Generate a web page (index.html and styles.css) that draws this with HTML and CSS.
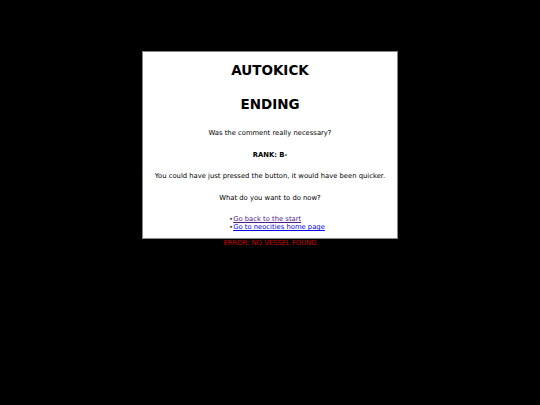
FILE: index.html
```html
<!DOCTYPE html>
<html>
<head>
<meta charset="utf-8">
<link rel="stylesheet" href="styles.css">
</head>
<body>
<div class="box">
  <h1 class="title">AUTOKICK</h1>
  <h1 class="title sub">ENDING</h1>
  <p class="line">Was the comment really necessary?</p>
  <p class="line bold">RANK: B-</p>
  <p class="line">You could have just pressed the button, it would have been quicker.</p>
  <p class="line">What do you want to do now?</p>
  <ul class="links">
    <li><a class="visited" href="#start">Go back to the start</a></li>
    <li><a href="#home">Go to neocities home page</a></li>
  </ul>
</div>
<div class="error">ERROR: NO VESSEL FOUND</div>
</body>
</html>
```
FILE: styles.css
```css
html, body {
  margin: 0;
  padding: 0;
  background: #000;
  font-family: "DejaVu Sans", Verdana, sans-serif;
}
body {
  padding-top: 51px;
}
.box {
  width: 254px;
  margin: 0 auto;
  background: #fff;
  border: 1px solid #888;
  padding: 10px 0 5px;
  text-align: center;
  color: #000;
}
.title {
  font-size: 13.5px;
  font-weight: bold;
  margin: 0;
  line-height: 17px;
}
.sub {
  margin-top: 17px;
}
.line {
  font-size: 6.8px;
  margin: 11.5px 0 0;
  line-height: 10px;
}
.sub + .line {
  margin-top: 15px;
}
.bold {
  font-weight: bold;
}
.links {
  display: inline-block;
  text-align: left;
  font-size: 6.8px;
  line-height: 8px;
  margin: 12.5px 0 0;
  padding-left: 18px;
  list-style: none;
}
.links li::before {
  content: "\2022";
  display: inline-block;
  width: 4px;
  margin-left: -4px;
  font-size: 6px;
  color: #000;
}
.links a {
  color: #0000ee;
}
.links a.visited {
  color: #551a8b;
}
.error {
  text-align: center;
  color: #c00;
  font-size: 6.8px;
  margin-top: 0;
  line-height: 9px;
}
```
